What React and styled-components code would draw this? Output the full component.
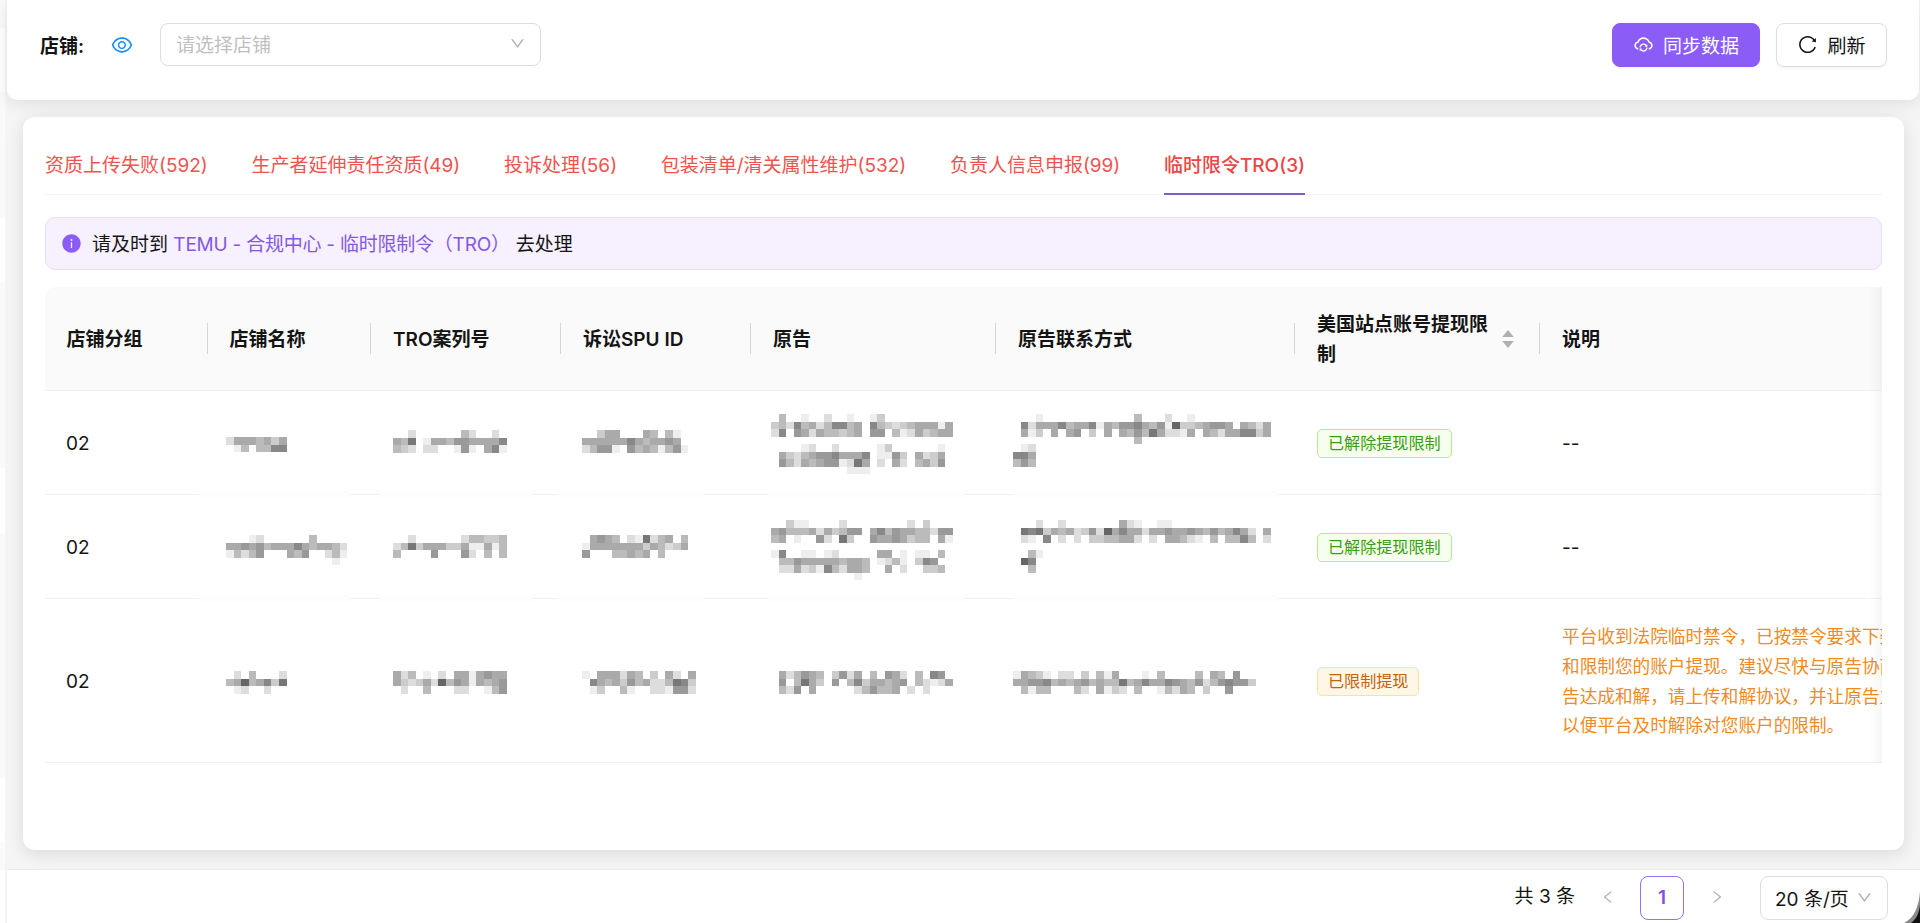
import React, { useState } from 'react';
import styled, { createGlobalStyle, css } from 'styled-components';
import {
	AiFillInfoCircle,
	AiOutlineCloudSync,
	AiOutlineDown,
	AiOutlineEye,
	AiOutlineLeft,
	AiOutlineReload,
	AiOutlineRight,
} from 'react-icons/ai';

const GlobalStyle = createGlobalStyle`
	* {
		box-sizing: border-box;
	}
	body {
		margin: 0;
		overflow: hidden;
		background: #f3f3f3;
		color: #141414;
		font-family: Inter, "Noto Sans CJK SC", sans-serif;
		font-size: 19px;
	}
	button {
		font: inherit;
		color: inherit;
		cursor: pointer;
	}
`;

const Page = styled.div`
	position: relative;
	display: flex;
	width: 1920px;
	height: 923px;
	overflow: hidden;
	background: #f5f5f5;
`;
const SideEdge = styled.div`
	display: flex;
	flex-direction: column;
	flex: none;
	width: 5px;
	margin-right: 2px;
`;
const SideBlock = styled.div`
	flex: none;
	height: ${({ $height }) => $height}px;
	background: ${({ $shaded }) => ($shaded ? '#fafafa' : '#fff')};
`;
const Main = styled.div`
	display: flex;
	flex-direction: column;
	flex: 1;
	min-width: 0;
`;

const Toolbar = styled.header`
	display: flex;
	align-items: flex-start;
	height: 100px;
	margin-right: 1px;
	padding: 23px 32px 0 33px;
	background: #fff;
	border-radius: 0 0 10px 10px;
	box-shadow: 0 4px 16px rgba(0, 0, 0, 0.09);
`;
const ShopLabel = styled.div`
	display: flex;
	align-items: center;
	width: 70px;
	height: 42px;
	font-weight: 600;
`;
const EyeIcon = styled(AiOutlineEye)`
	width: 24px;
	height: 24px;
	margin: 10px 26px 0 0;
	color: #1890ff;
`;
const ShopSelect = styled.div`
	display: flex;
	align-items: center;
	justify-content: space-between;
	width: 381px;
	height: 43px;
	padding: 0 14px 2px 15px;
	border: 1px solid #dedede;
	border-radius: 8px;
	color: #bfbfbf;
`;
const DownIcon = styled(AiOutlineDown)`
	width: 17px;
	height: 17px;
	color: #b0b0b0;
`;
const ToolbarActions = styled.div`
	display: flex;
	gap: 16px;
	margin-left: auto;
`;
const ToolbarBtn = styled.button`
	display: flex;
	align-items: center;
	justify-content: center;
	gap: 9px;
	width: ${({ $primary }) => ($primary ? 148 : 111)}px;
	height: 44px;
	padding: 0 0 2px;
	border: 1px solid ${({ $primary }) => ($primary ? '#8b5cf6' : '#dedede')};
	border-radius: 8px;
	background: ${({ $primary }) => ($primary ? '#8b5cf6' : '#fff')};
	color: ${({ $primary }) => ($primary ? '#fff' : '#141414')};
	box-shadow: 0 2px 2px rgba(0, 0, 0, 0.03);

	svg {
		width: 21px;
		height: 21px;
		margin-top: 1px;
	}
`;

const Card = styled.section`
	height: 733px;
	margin: 17px 16px 0;
	padding: 22px 22px 0;
	background: #fff;
	border-radius: 12px;
	box-shadow: 0 4px 18px rgba(0, 0, 0, 0.11);
`;
const Tabs = styled.nav`
	display: flex;
	gap: 43.6px;
	height: 56px;
	border-bottom: 1px solid #f4f4f4;
`;
const Tab = styled.button`
	flex: none;
	height: 56px;
	padding: 0 0 7px;
	border: 0;
	background: none;
	color: #ef5350;
	white-space: nowrap;

	${({ $active }) => $active && css`
		font-weight: 500;
		color: #ec4646;
		border-bottom: 2px solid #7f5cc9;
		padding-bottom: 5px;
	`}
`;
const Notice = styled.div`
	display: flex;
	align-items: center;
	height: 53px;
	margin-top: 22px;
	padding: 0 0 2px 15px;
	border: 1px solid #e8ddfb;
	border-radius: 10px;
	background: #f6f0ff;
	white-space: pre;

	svg {
		width: 21px;
		height: 21px;
		margin: 2px 10px 0 0;
		color: #8b5cf6;
	}
`;
const NoticeLink = styled.a`
	margin-right: 6px;
	color: #8558e0;
	letter-spacing: -0.23px;
`;

const Table = styled.div`
	position: relative;
	margin-top: 17px;
	overflow: hidden;
	border-radius: 10px 0 0 0;
`;
const ScrollShade = styled.div`
	position: absolute;
	top: 0;
	right: 0;
	bottom: 0;
	width: 13px;
	background: linear-gradient(to right, rgba(0, 0, 0, 0), rgba(0, 0, 0, 0.035));
`;
const Row = styled.div`
	display: grid;
	grid-template-columns: 163px 163px 190px 190px 245px 299px 245px 480px;
	width: 1975px;
	height: ${({ $height }) => $height}px;
	border-bottom: 1px solid #f2f2f2;
`;
const HeadRow = styled(Row)`
	background: #fafafa;
	font-weight: 600;
	line-height: 30px;
`;
const HeadCell = styled.div`
	display: flex;
	align-items: center;
	justify-content: space-between;
	padding-left: ${({ $tight }) => ($tight ? 21.4 : 22)}px;

	&:not(:last-child)::after {
		content: '';
		flex: none;
		width: 1px;
		height: 31px;
		background: #d6d6d6;
	}
`;
const HeadTitle = styled.span`
	padding-top: 2px;
`;
const SortTitle = styled(HeadTitle)`
	width: 172px;
`;
const SortIcon = styled.svg`
	width: 12px;
	height: 18px;
	margin: 0 12px 0 0;
	fill: #b0b0b0;
`;
const Cell = styled.div`
	position: relative;
	display: flex;
	align-items: ${({ $masked }) => ($masked ? 'flex-start' : 'center')};
	padding: ${({ $masked }) => ($masked ? 0 : 1)}px 0 0 22px;
`;
const GroupCell = styled(Cell)`
	padding-left: 21px;
`;
const MosaicSvg = styled.svg`
	flex: none;
	margin: ${({ $top, $left }) => `${$top}px 0 0 ${$left}px`};
	overflow: visible;
`;
// masking also washes out the row line below the cell
const LineMask = styled.div`
	position: absolute;
	bottom: -4px;
	left: ${({ $left }) => $left}px;
	width: ${({ $width }) => $width}px;
	height: 7px;
	background: #fdfdfd;
`;
const Tag = styled.span`
	height: 29px;
	padding: 0 10px;
	border: 1px solid ${({ $warning }) => ($warning ? '#ffdfa8' : '#b7eb8f')};
	border-radius: 5px;
	background: ${({ $warning }) => ($warning ? '#fff7e6' : '#f6ffed')};
	color: ${({ $warning }) => ($warning ? '#c4620f' : '#389e0d')};
	font-size: 16.1px;
	line-height: 26px;
`;
const Remark = styled.p`
	margin: 1px 0 0;
	color: #ee8b22;
	font-size: 17.65px;
	line-height: 29.8px;
	white-space: pre;
`;

const Footer = styled.footer`
	display: flex;
	align-items: flex-start;
	justify-content: flex-end;
	height: 54px;
	margin-top: auto;
	padding: 6px 32px 0 0;
	border-top: 1px solid #ececec;
	background: #fff;
`;
const Total = styled.span`
	margin-right: 25px;
	line-height: 41px;
`;
const PageArrow = styled.button`
	display: flex;
	padding: 13px 0 0;
	border: 0;
	background: none;
	color: #b5b5b5;

	svg {
		width: 16px;
		height: 16px;
	}
`;
const PageNumber = styled.button`
	width: 44px;
	height: 44px;
	margin: 0 25px 0 24px;
	padding: 0 0 2px;
	border: 1px solid #9a6ff5;
	border-radius: 8px;
	background: #fff;
	color: #8150e6;
	font-weight: 600;
`;
const PageSize = styled.div`
	display: flex;
	align-items: center;
	justify-content: space-between;
	width: 128px;
	height: 44px;
	margin-left: 35px;
	padding: 0 14px 2px 14px;
	border: 1px solid #dedede;
	border-radius: 8px;
`;
const WindowCorner = styled.svg`
	position: absolute;
	right: 0;
	bottom: 0;
	width: 18px;
	height: 36px;
`;

const SIDE_BLOCKS = [28, 64, 126, 65, 185, 65, 245, 65, 27, 53];

const TABS = [
	{ id: 'upload', title: '资质上传失败(592)' },
	{ id: 'epr', title: '生产者延伸责任资质(49)' },
	{ id: 'complaint', title: '投诉处理(56)' },
	{ id: 'packing', title: '包装清单/清关属性维护(532)' },
	{ id: 'manager', title: '负责人信息申报(99)' },
	{ id: 'tro', title: '临时限令TRO(3)' },
];

const COLUMNS = ['店铺分组', '店铺名称', 'TRO案列号', '诉讼SPU ID', '原告', '原告联系方式'];

const REMARK = [
	'平台收到法院临时禁令，已按禁令要求下架',
	'和限制您的账户提现。建议尽快与原告协商',
	'告达成和解，请上传和解协议，并让原告主',
	'以便平台及时解除对您账户的限制。',
];

// where each masked column starts, and which part of the row line it hides
const MASK_COLUMNS = [
	{ left: -4, lineLeft: -9, lineWidth: 151 },
	{ left: 0, lineLeft: 9, lineWidth: 152 },
	{ left: -1, lineLeft: -3, lineWidth: 146 },
	{ left: -2.4, lineLeft: 17, lineWidth: 196 },
	{ left: -4.6, lineLeft: 18, lineWidth: 263 },
];

// one digit per tile, 1 is the lightest grey and a dot is empty
const ROWS = [
	{
		group: '02',
		height: 104,
		masked: [
			{ top: 46, tiles: ['25554535', '.14.4477'] },
			{ top: 38.7, tiles: ['..2......42..2.', '548.15546655557', '432.22..161.571'] },
			{ top: 38.7, tiles: ['..355...54.41.', '5555557545565.', '24661.64541461'] },
			{
				top: 23,
				tiles: [
					'.4..1..2..1..13.........',
					'342745247745.74323455515',
					'27.652544345.66.41253455',
					'',
					'....12..2.....13......1.',
					'.532456675557.1163.5235.',
					'.642545661285.2.52.4536.',
					'..........111...........',
				],
			},
			{
				top: 23,
				tiles: [
					'...1............4...2..1..........',
					'.7255574557154667546193345665.5425',
					'.513.5.56.3.5.5464852215.542557735',
					'................4.................',
					'.12',
					'775',
					'464',
				],
			},
		],
		released: true,
	},
	{
		group: '02',
		height: 104,
		masked: [
			{ top: 40, tiles: ['...12......4....', '5565645557545542', '14246...546..241', '..............1.'] },
			{ top: 40, tiles: ['..2......244334', '248355533511514', '4....6...62.4.4'] },
			{ top: 40, tiles: ['.5654.218245.4', '15555555354235', '6...44545.4...'] },
			{
				top: 25,
				tiles: [
					'..311....2........2.3...',
					'564445253466.57465544266',
					'45.1..62.83..65565344.51',
					'',
					'17..11.12.....55.1.11.4.',
					'.446555554554.1241.376..',
					'.225231742554..5.2..334.',
					'...........1............',
				],
			},
			{
				top: 25,
				tiles: [
					'...2..2.......521..11.............',
					'.8783545236295755255655654645752.5',
					'.21.7.2.2.3344552.2.55421.4.4474.2',
					'',
					'..41',
					'.97.',
					'..4.',
				],
			},
		],
		released: true,
	},
	{
		group: '02',
		height: 164,
		masked: [
			{ top: 72, tiles: ['.2.4...2', '45945738', '.12..2..'] },
			{ top: 72, tiles: ['524.1.2.5515655', '532352946515456', '.2..4...22..146'] },
			{ top: 72, tiles: ['1.555254.3.52.5', '.75453645224873', '.13..41..221662'] },
			{
				top: 72,
				tiles: ['.524654.3625.4.652.4.76.', '.6.4853.6.47355456.42125', '.426.5.....246445.2.2...'],
			},
			{
				top: 72,
				tiles: [
					'15431.22.3.415...1.4....4.54.6....',
					'55667454564544845755765462467663..',
					'.4144...42.5132.4..14254.3..6.....',
				],
			},
		],
		released: false,
	},
];

const TILE_W = 7.58;
const TILE_H = 7.54;

function Mosaic({ tiles, top, left }) {
	return (
		<MosaicSvg
			$top={top}
			$left={left}
			width={Math.max(...tiles.map((line) => line.length)) * TILE_W}
			height={tiles.length * TILE_H}
			shapeRendering="crispEdges"
			aria-hidden="true"
		>
			{tiles.map((line, y) =>
				[...line].map((level, x) => {
					if (level === '.') return null;
					const grey = 255 - Number(level) * 17;
					return (
						<rect
							key={`${x}-${y}`}
							x={x * TILE_W}
							y={y * TILE_H}
							width={TILE_W}
							height={TILE_H}
							fill={`rgb(${grey}, ${grey}, ${grey})`}
						/>
					);
				})
			)}
		</MosaicSvg>
	);
}

function TableRow({ row }) {
	return (
		<Row $height={row.height}>
			<GroupCell>{row.group}</GroupCell>
			{row.masked.map((mask, i) => (
				<Cell key={i} $masked>
					<Mosaic tiles={mask.tiles} top={mask.top} left={MASK_COLUMNS[i].left} />
					{row.released && <LineMask $left={MASK_COLUMNS[i].lineLeft} $width={MASK_COLUMNS[i].lineWidth} />}
				</Cell>
			))}
			<Cell>
				<Tag $warning={!row.released}>{row.released ? '已解除提现限制' : '已限制提现'}</Tag>
			</Cell>
			<Cell>{row.released ? '--' : <Remark>{REMARK.join('\n')}</Remark>}</Cell>
		</Row>
	);
}

function App() {
	const [activeTab, setActiveTab] = useState('tro');

	return (
		<Page>
			<GlobalStyle />
			<SideEdge>
				{SIDE_BLOCKS.map((height, i) => (
					<SideBlock key={i} $height={height} $shaded={i % 2 === 0} />
				))}
			</SideEdge>
			<Main>
				<Toolbar>
					<ShopLabel>店铺:</ShopLabel>
					<EyeIcon />
					<ShopSelect>
						<span>请选择店铺</span>
						<DownIcon />
					</ShopSelect>
					<ToolbarActions>
						<ToolbarBtn $primary>
							<AiOutlineCloudSync />
							同步数据
						</ToolbarBtn>
						<ToolbarBtn>
							<AiOutlineReload />
							刷新
						</ToolbarBtn>
					</ToolbarActions>
				</Toolbar>
				<Card>
					<Tabs>
						{TABS.map(({ id, title }) => (
							<Tab key={id} $active={id === activeTab} onClick={() => setActiveTab(id)}>
								{title}
							</Tab>
						))}
					</Tabs>
					<Notice>
						<AiFillInfoCircle />
						<span>请及时到 </span>
						<NoticeLink>TEMU - 合规中心 - 临时限制令（TRO）</NoticeLink>
						<span>去处理</span>
					</Notice>
					<Table>
						<HeadRow $height={104}>
							{COLUMNS.map((title, i) => (
								<HeadCell key={title} $tight={i < 2}>
									<HeadTitle>{title}</HeadTitle>
								</HeadCell>
							))}
							<HeadCell>
								<SortTitle>美国站点账号提现限制</SortTitle>
								<SortIcon viewBox="0 0 12 18">
									<path d="M6 0L11.8 7H0.2z" />
									<path d="M6 18L11.8 11H0.2z" />
								</SortIcon>
							</HeadCell>
							<HeadCell>
								<HeadTitle>说明</HeadTitle>
							</HeadCell>
						</HeadRow>
						{ROWS.map((row, i) => (
							<TableRow key={i} row={row} />
						))}
						<ScrollShade />
					</Table>
				</Card>
				<Footer>
					<Total>共 3 条</Total>
					<PageArrow>
						<AiOutlineLeft />
					</PageArrow>
					<PageNumber>1</PageNumber>
					<PageArrow>
						<AiOutlineRight />
					</PageArrow>
					<PageSize>
						<span>20 条/页</span>
						<DownIcon />
					</PageSize>
				</Footer>
			</Main>
			<WindowCorner viewBox="0 0 18 36">
				<path d="M18 4C17 20 12 31 2 36H18z" fill="#8a8a8a" />
				<path d="M18 18C17 27 14 32 9 36H18z" fill="#111" />
			</WindowCorner>
		</Page>
	);
}

export default App;
